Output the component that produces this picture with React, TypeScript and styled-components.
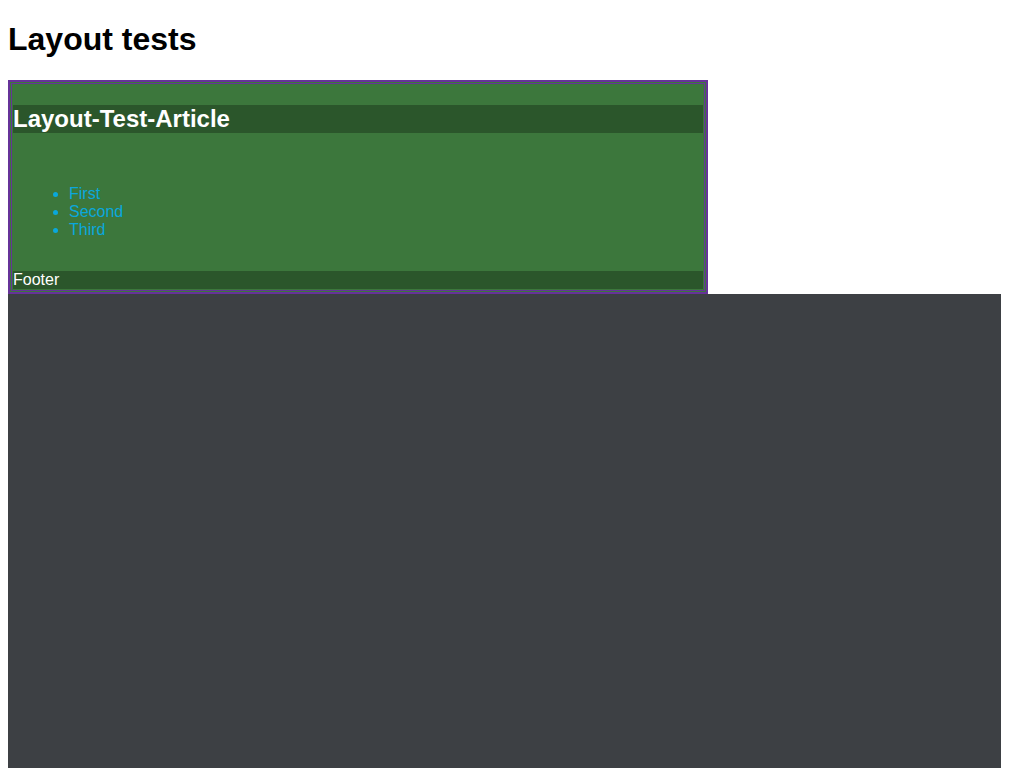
import React from "react";
import styled, { createGlobalStyle } from "styled-components";

const GlobalStyle = createGlobalStyle`
  html {
    overflow-y: scroll;
  }
  html::-webkit-scrollbar {
    width: 15px;
    background: #f1f1f1;
  }
  html::-webkit-scrollbar-thumb {
    background: #c1c1c1;
    border: solid #f1f1f1;
    border-width: 0 2px;
  }
  body {
    /* leaves room for the 15px scrollbar the reference shows */
    margin: 0 23px 8px 8px;
    font-family: "Liberation Sans", Arial, sans-serif;
    background: #ffffff;
    color: #000000;
  }
`;

const Title = styled.h1`
  font-size: 32px;
  font-weight: bold;
  margin: 21.44px 0;
`;

const Article = styled.article`
  width: 700px;
  box-sizing: border-box;
  background-color: #3c773c;
  border: 2px solid #663399;
  padding: 1px;
`;

const Inner = styled.div`
  display: grid;
  grid-template-rows: auto 1fr auto;
  border: 1px solid #663399;
  padding: 1px;
`;

const Header = styled.h2`
  margin: 19.92px 0;
  font-size: 24px;
  font-weight: bold;
  color: white;
  background-color: rgba(0, 0, 0, 0.27);
`;

const Main = styled.main`
  padding: 16px;
`;

const List = styled.ul`
  margin: 16px 0;
  padding-left: 40px;
  color: #0aa8dc;
  font-size: 16px;
`;

const Footer = styled.footer`
  color: white;
  font-size: 16px;
  background-color: rgba(0, 0, 0, 0.27);
`;

const Filler = styled.div`
  height: 8158px;
  background-color: #3d4044;
`;

const App: React.FC = () => (
  <>
    <GlobalStyle />
    <Title>Layout tests</Title>
    <Article>
      <Inner>
        <Header>Layout-Test-Article</Header>
        <Main>
          <List>
            <li>First</li>
            <li>Second</li>
            <li>Third</li>
          </List>
        </Main>
        <Footer>Footer</Footer>
      </Inner>
    </Article>
    <Filler />
  </>
);

export default App;
